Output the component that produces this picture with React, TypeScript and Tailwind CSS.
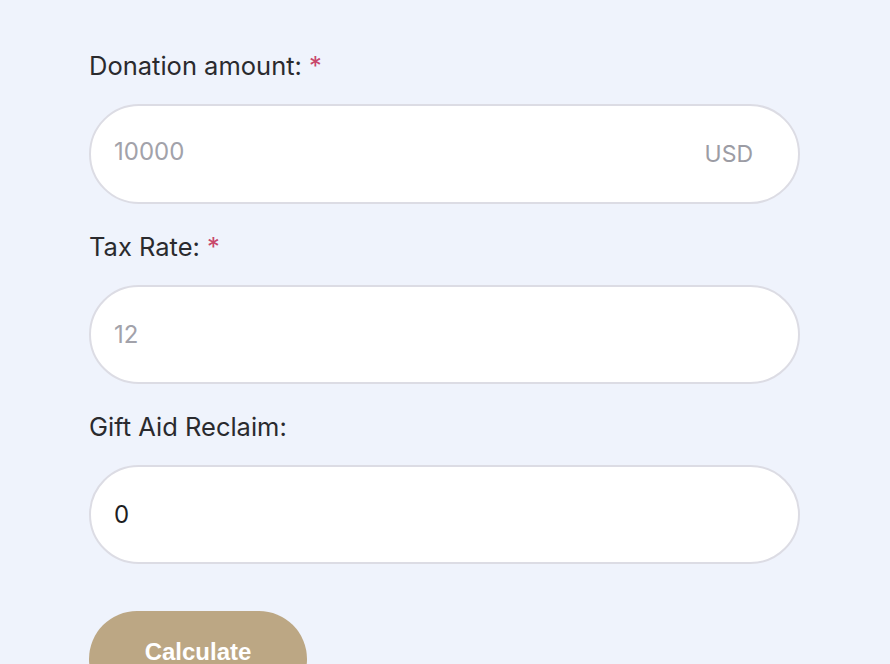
import { ReactNode } from "react";

function Field({ label, required, children }: { label: string; required?: boolean; children: ReactNode }) {
    return (
        <div className="flex flex-col">
            <label className="text-[25.5px] leading-[32px] text-[#2a2a2e] mb-[22px]">
                {label}
                {required && <span className="text-[#c8476b] ml-[7px]">*</span>}
            </label>
            {children}
        </div>
    );
}

export default function App() {
    return (
        <div className="h-[664px] overflow-hidden bg-[#eff3fc] pl-[89px] pt-[50px]" style={{ fontFamily: "Inter, 'Noto Sans', sans-serif" }}>
            <div className="w-[711px] flex flex-col gap-[27px]">
                <Field label="Donation amount:" required>
                    <div className="h-[100px] rounded-[50px] bg-white border-2 border-[#dcdce4] flex items-center pl-[23px] pr-[45px]">
                        <span className="flex-1 text-[24px] text-[#a2a2aa] -mt-[4px]">10000</span>
                        <span className="text-[23px] text-[#9c9ca4]">USD</span>
                    </div>
                </Field>
                <Field label="Tax Rate:" required>
                    <div className="h-[99px] rounded-[50px] bg-white border-2 border-[#dcdce4] flex items-center pl-[23px]">
                        <span className="text-[24px] text-[#a2a2aa]">12</span>
                    </div>
                </Field>
                <Field label="Gift Aid Reclaim:">
                    <div className="h-[99px] rounded-[50px] bg-white border-2 border-[#dcdce4] flex items-center pl-[23px]">
                        <span className="text-[24px] text-[#1e1e22]">0</span>
                    </div>
                </Field>
            </div>
            <button
                className="mt-[47px] w-[218px] h-[96px] rounded-[48px] bg-[#bca784] text-white font-bold text-[24px] flex items-start justify-center pt-[23px]"
                style={{ fontFamily: "'Liberation Sans', Arial, sans-serif" }}
            >
                Calculate
            </button>
        </div>
    );
}
